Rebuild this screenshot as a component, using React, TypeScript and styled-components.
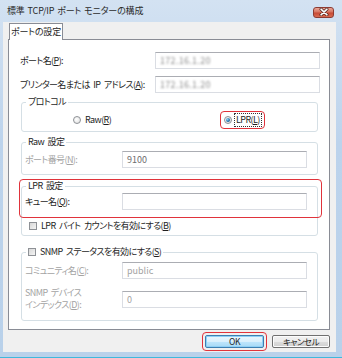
import React from 'react';
import styled, { createGlobalStyle } from 'styled-components';

const GlobalStyle = createGlobalStyle`
  html, body {
    margin: 0;
    padding: 0;
    background: #ffffff;
  }
  body {
    font-family: "Noto Sans CJK JP", "Noto Sans", sans-serif;
    font-feature-settings: "palt";
    font-size: 9px;
    letter-spacing: -0.6px;
    word-spacing: 2px;
    line-height: 12px;
    color: #1e1e1e;
  }
`;

const Window = styled.div`
  width: 342px;
  height: 358px;
  box-sizing: border-box;
  display: flex;
  flex-direction: column;
  background: linear-gradient(180deg, #d3e2f2 0%, #bcd3ec 40%, #b9d1ea 100%);
  border-bottom: 1px solid #3fb8dc;
`;

const TitleBar = styled.div`
  height: 22px;
  flex: none;
  display: flex;
  align-items: center;
  justify-content: space-between;
  padding: 0 8px 0 7px;
`;

const Title = styled.span`
  color: #2b2b2b;
  font-size: 9px;
  letter-spacing: -0.15px;
  word-spacing: 1px;
`;

const CloseButton = styled.div`
  width: 21px;
  height: 11px;
  margin-top: 2px;
  border: 1px solid #8d3b32;
  border-radius: 3px;
  box-sizing: border-box;
  background: linear-gradient(180deg, #eaa696 0%, #d6735f 45%, #c84a35 55%, #d86c52 100%);
  display: flex;
  align-items: center;
  justify-content: center;
`;

const Client = styled.div`
  flex: 1;
  margin: 0 6px 5px 3px;
  background: #f0f0f0;
  padding: 1px 6px 0 5px;
  display: flex;
  flex-direction: column;
`;

const TabStrip = styled.div`
  height: 16px;
  display: flex;
  padding-left: 1px;
  position: relative;
  z-index: 1;
`;

const Tab = styled.div`
  width: 54px;
  height: 17px;
  box-sizing: border-box;
  background: #ffffff;
  border: 1px solid #898c95;
  border-bottom: none;
  display: flex;
  align-items: center;
  justify-content: center;
  white-space: nowrap;
  letter-spacing: -0.2px;
`;

const Panel = styled.div`
  height: 291px;
  box-sizing: border-box;
  background: #ffffff;
  border: 1px solid #898c95;
  padding: 12px 9px 0 11px;
  display: flex;
  flex-direction: column;
`;

const FieldRow = styled.div<{ $gap?: number }>`
  display: flex;
  align-items: center;
  justify-content: space-between;
  margin-top: ${(p) => p.$gap ?? 0}px;
`;

const Label = styled.span<{ $disabled?: boolean }>`
  color: ${(p) => (p.$disabled ? '#a3a3a3' : '#1e1e1e')};
  white-space: nowrap;
`;

const TextBox = styled.div<{ $width: number; $muted?: boolean; $dim?: boolean }>`
  width: ${(p) => p.$width}px;
  height: 17px;
  box-sizing: border-box;
  background: #ffffff;
  border: 1px solid #dadde3;
  border-top-color: #abadb3;
  padding: 2px 4px 0;
  letter-spacing: 0;
  color: ${(p) => (p.$dim ? '#a3a3a3' : p.$muted ? '#6d6d6d' : '#1e1e1e')};
`;

const Blurred = styled.span`
  color: #8f8f8f;
  filter: blur(1.3px);
  letter-spacing: 0.3px;
`;

const Group = styled.fieldset<{ $gap: number }>`
  position: relative;
  margin: ${(p) => p.$gap}px 2px 0 1px;
  padding: 0 10px 0 3px;
  border: 1px solid #d5dfe5;
  border-radius: 3px;
  min-width: 0;
`;

const Legend = styled.legend`
  padding: 0 2px;
  margin-left: 1px;
  line-height: 12px;
  display: flex;
  align-items: center;
  gap: 4px;
`;

const GroupBody = styled.div<{ $top: number; $bottom: number }>`
  padding: ${(p) => p.$top}px 0 ${(p) => p.$bottom}px;
  display: flex;
  flex-direction: column;
`;

const RadioRow = styled.div`
  display: grid;
  grid-template-columns: 151px auto;
  justify-items: start;
  align-items: center;
  padding-left: 48px;
  height: 12px;
`;

const Choice = styled.label`
  display: inline-flex;
  align-items: center;
  gap: 4px;
`;

const Radio = styled.span<{ $checked?: boolean }>`
  width: 8px;
  height: 8px;
  border-radius: 50%;
  box-sizing: border-box;
  border: 1px solid #8e9196;
  background: radial-gradient(circle at 40% 40%, #ffffff 0%, #dcdcdc 100%);
  display: flex;
  align-items: center;
  justify-content: center;
  &::after {
    content: '';
    display: ${(p) => (p.$checked ? 'block' : 'none')};
    width: 4px;
    height: 4px;
    border-radius: 50%;
    background: radial-gradient(circle at 35% 35%, #8fd2f5 0%, #1f6fa8 60%, #0f3d66 100%);
  }
`;

const Highlight = styled.span`
  display: inline-flex;
  align-items: center;
  gap: 3px;
  padding: 2px 3px;
  margin-left: -4px;
  border: 1.5px solid #e0333b;
  border-radius: 4px;
`;

const FocusText = styled.span`
  outline: 1px dotted #333;
  padding: 0 1px;
`;

const Accel = styled.u`
  text-decoration: underline;
  text-underline-offset: 1px;
`;

const Check = styled.span`
  width: 8px;
  height: 8px;
  box-sizing: border-box;
  border: 1px solid #8e9196;
  background: linear-gradient(135deg, #d8d8d8 0%, #f4f4f4 100%);
  flex: none;
`;

const CheckRow = styled.label<{ $gap: number }>`
  display: flex;
  align-items: center;
  gap: 4px;
  margin-top: ${(p) => p.$gap}px;
  padding-left: 4px;
  height: 12px;
`;

const Callout = styled.div`
  position: absolute;
  left: -3px;
  right: -5px;
  top: -13px;
  height: 37px;
  border: 1.5px solid #e0333b;
  border-radius: 4px;
  pointer-events: none;
`;

const TwoLineLabel = styled(Label)`
  white-space: normal;
  line-height: 12px;
`;

const Footer = styled.div`
  height: 22px;
  display: flex;
  align-items: center;
  justify-content: flex-end;
  gap: 5px;
`;

const ButtonRing = styled.span`
  display: inline-flex;
  padding: 2px;
  border: 1.5px solid #e0333b;
  border-radius: 4px;
`;

const Button = styled.button<{ $default?: boolean; $width: number }>`
  width: ${(p) => p.$width}px;
  height: 13px;
  padding: 0;
  font-family: inherit;
  font-feature-settings: "palt";
  font-size: 8.5px;
  letter-spacing: -0.5px;
  line-height: 11px;
  color: #1e1e1e;
  border-radius: 2px;
  border: 1px solid ${(p) => (p.$default ? '#3c7fb1' : '#707070')};
  background: ${(p) =>
    p.$default
      ? 'linear-gradient(180deg, #eaf6fd 0%, #d9f0fc 50%, #bee6fd 51%, #a7d9f5 100%)'
      : 'linear-gradient(180deg, #f2f2f2 0%, #ebebeb 50%, #dddddd 51%, #cfcfcf 100%)'};
  box-shadow: inset 0 0 0 1px ${(p) => (p.$default ? '#8fd0f5' : '#fcfcfc')};
`;

const CloseGlyph = () => (
  <svg width="10" height="8" viewBox="0 0 10 8">
    <path d="M2 1.2 L8 6.8 M8 1.2 L2 6.8" stroke="#4a1d16" strokeWidth="3" strokeLinecap="round" />
    <path d="M2 1.2 L8 6.8 M8 1.2 L2 6.8" stroke="#ffffff" strokeWidth="1.6" strokeLinecap="round" />
  </svg>
);

const App = () => {
  return (
    <>
      <GlobalStyle />
      <Window>
        <TitleBar>
          <Title>標準 TCP/IP ポート モニターの構成</Title>
          <CloseButton>
            <CloseGlyph />
          </CloseButton>
        </TitleBar>
        <Client>
          <TabStrip>
            <Tab>ポートの設定</Tab>
          </TabStrip>
          <Panel>
            <FieldRow>
              <Label>
                ポート名(<Accel>P</Accel>):
              </Label>
              <TextBox $width={165}>
                <Blurred>172.16.1.20</Blurred>
              </TextBox>
            </FieldRow>
            <FieldRow $gap={7}>
              <Label>
                プリンター名または IP アドレス(<Accel>A</Accel>):
              </Label>
              <TextBox $width={165}>
                <Blurred>172.16.1.20</Blurred>
              </TextBox>
            </FieldRow>

            <Group $gap={3}>
              <Legend>プロトコル</Legend>
              <GroupBody $top={3} $bottom={8}>
                <RadioRow>
                  <Choice>
                    <Radio />
                    <span>
                      Raw(<Accel>R</Accel>)
                    </span>
                  </Choice>
                  <Highlight>
                    <Radio $checked />
                    <FocusText>
                      LPR(<Accel>L</Accel>)
                    </FocusText>
                  </Highlight>
                </RadioRow>
              </GroupBody>
            </Group>

            <Group $gap={4}>
              <Legend>Raw 設定</Legend>
              <GroupBody $top={3} $bottom={6}>
                <FieldRow>
                  <Label $disabled>
                    ポート番号(<Accel>N</Accel>):
                  </Label>
                  <TextBox $width={185} $muted>
                    9100
                  </TextBox>
                </FieldRow>
              </GroupBody>
            </Group>

            <Group $gap={5}>
              <Callout />
              <Legend>LPR 設定</Legend>
              <GroupBody $top={1} $bottom={3}>
                <FieldRow>
                  <Label>
                    キュー名(<Accel>Q</Accel>):
                  </Label>
                  <TextBox $width={185} />
                </FieldRow>
                <CheckRow $gap={10}>
                  <Check />
                  <span>
                    LPR バイト カウントを有効にする(<Accel>B</Accel>)
                  </span>
                </CheckRow>
              </GroupBody>
            </Group>

            <Group $gap={10}>
              <Legend>
                <Check />
                <span>
                  SNMP ステータスを有効にする(<Accel>S</Accel>)
                </span>
              </Legend>
              <GroupBody $top={4} $bottom={9}>
                <FieldRow>
                  <Label $disabled>
                    コミュニティ名(<Accel>C</Accel>):
                  </Label>
                  <TextBox $width={185} $dim>
                    public
                  </TextBox>
                </FieldRow>
                <FieldRow $gap={8}>
                  <TwoLineLabel $disabled>
                    SNMP デバイス
                    <br />
                    インデックス(<Accel>D</Accel>):
                  </TwoLineLabel>
                  <TextBox $width={185} $dim>
                    0
                  </TextBox>
                </FieldRow>
              </GroupBody>
            </Group>
          </Panel>
          <Footer>
            <ButtonRing>
              <Button $default $width={59}>
                OK
              </Button>
            </ButtonRing>
            <Button $width={58}>キャンセル</Button>
          </Footer>
        </Client>
      </Window>
    </>
  );
};

export default App;
